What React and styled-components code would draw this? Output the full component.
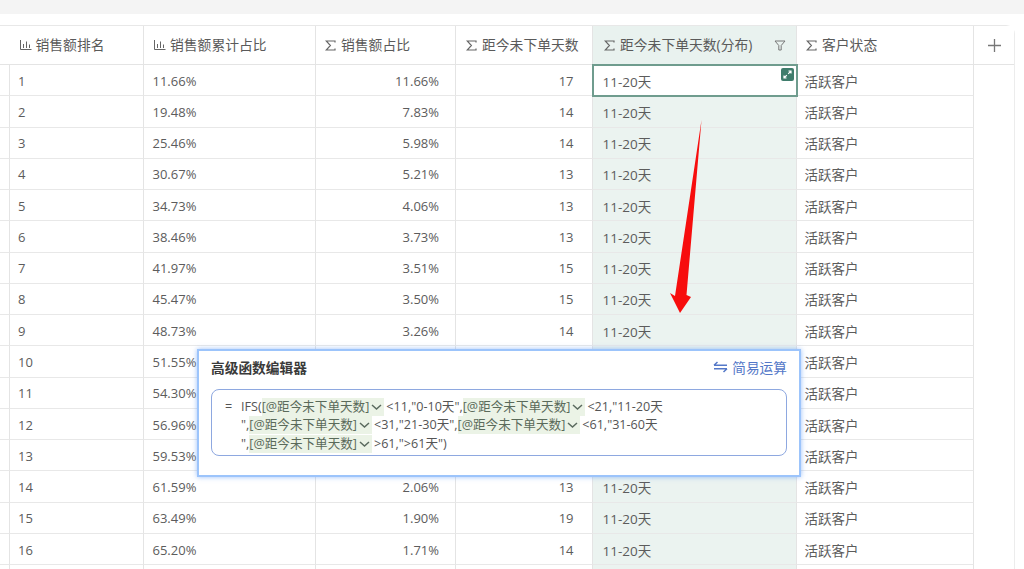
import React from "react";
import styled, { createGlobalStyle } from "styled-components";

const Global = createGlobalStyle`
  html, body { margin: 0; padding: 0; background: #fff; }
  body { width: 1024px; height: 569px; overflow: hidden; font-family: "Open Sans", "Noto Sans CJK SC", sans-serif; }
`;

const Page = styled.div`
  position: relative;
  width: 1024px;
  height: 569px;
  overflow: hidden;
  background: #fff;
`;
const TopBar = styled.div`
  height: 14px;
  background: #f4f4f4;
`;
const Sheet = styled.div`
  margin-top: 11px;
  width: 1015px;
  border-top: 1px solid #e8e8e8;
  border-top-right-radius: 9px;
  border-right: 1px solid #ececec;
  box-sizing: border-box;
  height: 600px;
`;
const COLS = "10px 134px 172px 140px 137px 204px 177px 1fr";
const HeaderRow = styled.div`
  display: grid;
  grid-template-columns: ${COLS};
  height: 38px;
  border-bottom: 1px solid #e4e4e4;
`;
const HeadCell = styled.div`
  display: flex;
  align-items: center;
  gap: 4px;
  padding-left: ${p => p.$pad ?? 8}px;
  padding-right: 10px;
  border-right: 1px solid ${p => (p.$last ? "transparent" : "#e4e4e4")};
  background: ${p => (p.$active ? "#e9f2ef" : "#fff")};
  color: #5a5a5a;
  font-size: 13.8px;
  line-height: 38px;
  min-width: 0;
  white-space: nowrap;
  box-sizing: border-box;
`;
const HeadLabel = styled.span`
  flex: 1;
`;
const AddCell = styled(HeadCell)`
  justify-content: center;
  padding: 0 0 0 1px;
  border-right: none;
`;
const Row = styled.div`
  display: grid;
  grid-template-columns: ${COLS};
  height: 31.28px;
`;
const Cell = styled.div`
  position: relative;
  display: flex;
  align-items: center;
  justify-content: ${p => (p.$right ? "flex-end" : "flex-start")};
  padding: ${p => (p.$right ? `1px ${p.$pad}px 0 0` : `1px 0 0 ${p.$pad ?? 8}px`)};
  border-right: 1px solid #e4e4e4;
  border-bottom: 1px solid #e8e8e8;
  background: ${p => (p.$active ? "#ebf3f0" : "#fff")};
  color: #5c5c5c;
  font-size: 13px;
  box-sizing: border-box;
  white-space: nowrap;
  min-width: 0;
`;
const TextCell = styled(Cell)`
  font-size: 13.5px;
`;
const SelectedCell = styled(TextCell)`
  background: #fff;
  outline: 2px solid #6f9c8e;
  outline-offset: -1px;
  z-index: 1;
`;
const Expand = styled.span`
  position: absolute;
  top: 3px;
  right: 2px;
  width: 13px;
  height: 13px;
  border-radius: 2px;
  background: #3f7d6c;
  display: flex;
  align-items: center;
  justify-content: center;
`;
const Popover = styled.section`
  position: absolute;
  left: 196.5px;
  top: 348.5px;
  width: 604px;
  height: 128px;
  box-sizing: border-box;
  background: #fff;
  border: 2px solid #9cc4fb;
  box-shadow: 0 0 5px rgba(90, 150, 245, 0.6);
  padding: 6.5px 11.5px 0 12.5px;
  z-index: 3;
`;
const PopHead = styled.div`
  display: flex;
  align-items: center;
  justify-content: space-between;
  height: 20px;
  margin-bottom: 12px;
`;
const PopTitle = styled.h3`
  margin: 0;
  font-size: 13.7px;
  font-weight: 700;
  color: #3a3a3a;
`;
const SwitchLink = styled.span`
  display: flex;
  align-items: center;
  gap: 4px;
  color: #5478c8;
  font-size: 13.7px;
`;
const Editor = styled.div`
  display: flex;
  height: 67px;
  box-sizing: border-box;
  border: 1px solid #8ea8e0;
  border-radius: 8px;
  padding: 8px 0 0 13px;
  color: #555;
  font-size: 12.6px;
  line-height: 18.4px;
  white-space: nowrap;
`;
const Equals = styled.span`
  width: 16px;
  flex: none;
`;
const Token = styled.span`
  background: #ebf3e6;
  color: #5a6a5a;
  display: inline-flex;
  align-items: center;
  height: 18px;
  vertical-align: top;
  margin-right: 2px;
`;
const Arrow = styled.svg`
  position: absolute;
  left: 660px;
  top: 115px;
  z-index: 2;
`;

const Bars = () => (
  <svg width="13" height="12" viewBox="0 0 13 12" fill="none" stroke="#666" strokeWidth="1">
    <path d="M1.5 1v9.5h11M4.5 5v4M7.5 2.5V9M10.5 5.5V9" />
  </svg>
);
const Sigma = () => (
  <svg width="11" height="11" viewBox="0 0 11 11" fill="none" stroke="#666" strokeWidth="1.2" style={{ margin: "0 1px" }}>
    <path d="M10 2.5V1H1.2l4.2 4.5L1.2 10H10V8.5" />
  </svg>
);
const Funnel = () => (
  <svg width="12" height="11" viewBox="0 0 12 11" fill="none" stroke="#777" strokeWidth="1">
    <path d="M1 1h10L7.2 5.5V10H4.8V5.5z" />
  </svg>
);
const Chev = () => (
  <svg width="15" height="10" viewBox="0 0 15 10" fill="none" stroke="#5a6a5e" strokeWidth="1.5">
    <path d="M3 3l4.5 4L12 3" />
  </svg>
);

const cum = ["11.66","19.48","25.46","30.67","34.73","38.46","41.97","45.47","48.73","51.55","54.30","56.96","59.53","61.59","63.49","65.20","66.80"];
const share = ["11.66","7.83","5.98","5.21","4.06","3.73","3.51","3.50","3.26","2.82","2.75","2.66","2.57","2.06","1.90","1.71","1.60"];
const days = [17,14,14,13,13,13,15,15,14,14,14,13,13,13,19,14,15];

const VALUE = "11-20天";
const STATUS = "活跃客户";

export default function App() {
  return (
    <Page>
      <Global />
      <TopBar />
      <Sheet>
        <HeaderRow>
          <HeadCell />
          <HeadCell $pad={8.5}><Bars /><span>销售额排名</span></HeadCell>
          <HeadCell $pad={9}><Bars /><span>销售额累计占比</span></HeadCell>
          <HeadCell $pad={8}><Sigma /><span>销售额占比</span></HeadCell>
          <HeadCell $pad={9}><Sigma /><span>距今未下单天数</span></HeadCell>
          <HeadCell $active $pad={10}><Sigma /><HeadLabel>距今未下单天数(分布)</HeadLabel><Funnel /></HeadCell>
          <HeadCell $pad={8}><Sigma /><span>客户状态</span></HeadCell>
          <AddCell $last>
            <svg width="15" height="15" viewBox="0 0 15 15" stroke="#777" strokeWidth="1.3"><path d="M7.5 1v13M1 7.5h13" /></svg>
          </AddCell>
        </HeaderRow>
        {cum.map((c, i) => (
          <Row key={c}>
            <Cell />
            <Cell $pad={8}>{i + 1}</Cell>
            <Cell $pad={8.5}>{c}%</Cell>
            <Cell $right $pad={16}>{share[i]}%</Cell>
            <Cell $right $pad={18.5}>{days[i]}</Cell>
            {i === 0 ? (
              <SelectedCell $pad={9.5}>
                {VALUE}
                <Expand>
                  <svg width="9" height="9" viewBox="0 0 9 9" fill="none" stroke="#fff" strokeWidth="1.2">
                    <path d="M5.5 1H8v2.5M8 1L5.2 3.8M3.5 8H1V5.5M1 8l2.8-2.8" />
                  </svg>
                </Expand>
              </SelectedCell>
            ) : (
              <TextCell $active $pad={9.5}>{VALUE}</TextCell>
            )}
            <TextCell $pad={7.5}>{STATUS}</TextCell>
          </Row>
        ))}
      </Sheet>

      <Arrow width="50" height="205" viewBox="0 0 50 205">
        <path d="M41.5 5 L26.5 180 L31 182 L20 198 L10 178 L15 181 Z" fill="#f70d0d" />
      </Arrow>

      <Popover>
        <PopHead>
          <PopTitle>高级函数编辑器</PopTitle>
          <SwitchLink>
            <svg width="15" height="12" viewBox="0 0 15 12" fill="none" stroke="#5478c8" strokeWidth="1.5">
              <path d="M1 4.2h13M1 4.2L4.5 1M14 7.8H1M14 7.8l-3.5 3.2" />
            </svg>
            简易运算
          </SwitchLink>
        </PopHead>
        <Editor>
          <Equals>=</Equals>
          <div>
            IFS(<Token>[@距今未下单天数]<Chev /></Token>&lt;11,"0-10天",<Token>[@距今未下单天数]<Chev /></Token>&lt;21,"11-20天<br />
            ",<Token>[@距今未下单天数]<Chev /></Token>&lt;31,"21-30天",<Token>[@距今未下单天数]<Chev /></Token>&lt;61,"31-60天<br />
            ",<Token>[@距今未下单天数]<Chev /></Token>&gt;61,"&gt;61天")
          </div>
        </Editor>
      </Popover>
    </Page>
  );
}
